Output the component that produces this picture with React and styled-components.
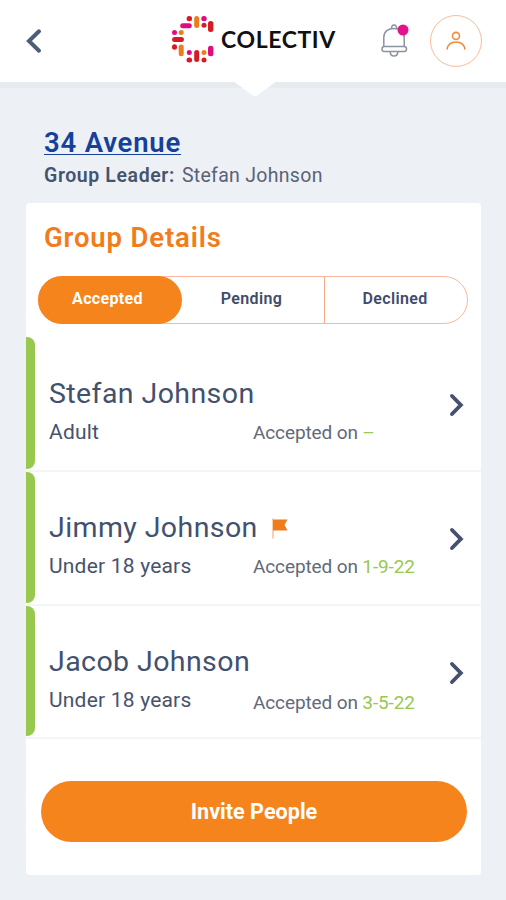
import React from "react";
import styled, { createGlobalStyle } from "styled-components";

const Global = createGlobalStyle`
  * { box-sizing: border-box; }
  body { margin: 0; background: #edf1f6; font-family: Roboto, "Liberation Sans", sans-serif; color: #41506d; }
  button { font: inherit; border: 0; padding: 0; background: none; cursor: pointer; }
`;

const Page = styled.div`
  width: 506px;
  height: 900px;
  overflow: hidden;
  background: #edf1f6;
`;

const Header = styled.header`
  position: relative;
  display: flex;
  align-items: center;
  height: 82px;
  padding: 0 24px 0 25px;
  background: #fff;
  box-shadow: 0 6px 0 #e7eaee;
`;

const Notch = styled.svg`
  position: absolute;
  left: 233px;
  top: 81px;
`;

const BackButton = styled.button`
  display: flex;
  width: 18px;
  margin-right: 127px;
`;

const Brand = styled.div`
  display: flex;
  align-items: center;
  width: 210px;
  gap: 7px;
`;

const BrandMark = styled.svg`
  flex: none;
  margin-top: -2px;
`;

const BrandName = styled.span`
  font-family: Lato, sans-serif;
  font-weight: 700;
  font-size: 23px;
  line-height: 28px;
  letter-spacing: 0.6px;
  color: #111;
  margin-top: -4px;
`;

const BellButton = styled.button`
  display: flex;
  margin-right: 21px;
`;

const Avatar = styled.button`
  display: flex;
  align-items: center;
  justify-content: center;
  width: 52px;
  height: 52px;
  border: 1px solid #f9bd9b;
  border-radius: 50%;
`;

const GroupIntro = styled.section`
  height: 121px;
  padding: 44px 0 0 44px;
`;

const GroupLink = styled.a`
  display: block;
  width: max-content;
  height: 29px;
  border-bottom: 1px solid #16419a;
  font-weight: 600;
  font-size: 27.5px;
  line-height: 33px;
  letter-spacing: 0.8px;
  color: #16419a;
`;

const Leader = styled.p`
  display: flex;
  gap: 7px;
  margin: 9px 0 0;
  font-size: 19.5px;
  line-height: 24px;
  letter-spacing: 0.3px;
  color: #596377;
`;

const LeaderLabel = styled.span`
  font-weight: 600;
  letter-spacing: 0.6px;
  color: #46536d;
`;

const Card = styled.main`
  width: 455px;
  height: 672px;
  margin-left: 26px;
  padding-top: 18px;
  background: #fff;
  border-radius: 4px;
`;

const CardTitle = styled.h1`
  margin: 0 0 22px 18px;
  font-weight: 600;
  font-size: 27.5px;
  line-height: 33px;
  letter-spacing: 0.85px;
  color: #f17c1b;
`;

const Tabs = styled.div`
  display: grid;
  grid-template-columns: 142px 143px 143px;
  width: 430px;
  height: 48px;
  margin: 0 0 13px 12px;
  border: 1px solid #f8b89f;
  border-radius: 24px;
`;

const Tab = styled.button`
  height: ${(p) => (p.$active ? "48px" : "46px")};
  margin: ${(p) => (p.$active ? "-1px -1px 0 -1px" : "0")};
  padding: ${(p) => (p.$active ? "0 5px 3px 0" : "0 2px 3px 0")};
  border-left: ${(p) => (p.$divided ? "1px solid #f8a987" : "0")};
  border-radius: ${(p) => (p.$active ? "24px" : "0")};
  background: ${(p) => (p.$active ? "#f5841c" : "transparent")};
  color: ${(p) => (p.$active ? "#fff" : "#414b6c")};
  font-size: 16px;
  font-weight: ${(p) => (p.$active ? 700 : 600)};
  letter-spacing: 0.35px;
`;

const Member = styled.article`
  display: flex;
  align-items: center;
  height: ${(p) => p.$height}px;
  padding-right: 16px;
  border-bottom: 2px solid #f3f5f8;
`;

const Status = styled.div`
  align-self: stretch;
  width: 9px;
  margin: 0 14px 1px 0;
  border-radius: 0 8px 8px 0;
  background: #98c84d;
`;

const MemberBody = styled.div`
  flex: 1;
  padding-top: 15px;
`;

const NameLine = styled.div`
  display: flex;
  align-items: center;
  gap: 14px;
  height: 34px;
  font-size: 28.5px;
  font-weight: 450;
  line-height: 34px;
  letter-spacing: 0.42px;
  color: #42516e;
`;

const DetailLine = styled.div`
  display: grid;
  grid-template-columns: 204px 1fr;
  margin-top: 7px;
  font-size: 21px;
  font-weight: 450;
  line-height: 28px;
  letter-spacing: 0.2px;
  color: #46536d;
`;

const Accepted = styled.span`
  padding-top: ${(p) => p.$drop}px;
  height: 28px;
  font-size: 19px;
  font-weight: 400;
  letter-spacing: -0.12px;
  color: #62697c;
`;

const DateText = styled.span`
  color: #98c84d;
`;

const InviteButton = styled.button`
  display: block;
  width: 426px;
  height: 61px;
  margin: 42px 0 0 15px;
  border-radius: 31px;
  background: #f5841c;
  color: #fff;
  font-size: 21.6px;
  font-weight: 700;
`;

const ChevronIcon = styled.svg`
  flex: none;
  margin-top: 2px;
`;

const RED = "#d51b24";
const PINK = "#e20a83";
const ORANGE = "#ee7d17";

/* centre x, centre y, width, height, colour of each pill of the mark */
const pills = [
  [17.3, 2.6, 5.4, 5.2, RED],
  [24.7, 6, 5, 12, ORANGE],
  [32, 2.6, 5.4, 5.2, PINK],
  [14, 9.8, 11.6, 5, PINK],
  [32, 9.3, 5, 5, RED],
  [38.7, 10.6, 5.4, 11, RED],
  [2.5, 16.5, 5, 5, PINK],
  [9.2, 16.5, 5, 5, ORANGE],
  [6, 23.5, 11.8, 5, RED],
  [2.5, 31, 5, 5.4, RED],
  [9.2, 34.3, 5, 11.8, ORANGE],
  [17.3, 36.4, 5, 5, PINK],
  [24.7, 40, 5, 12, RED],
  [32, 36.4, 5, 5, ORANGE],
  [38.7, 35, 5.4, 10.6, PINK],
  [17.3, 44, 5.6, 5, RED],
  [32, 44, 5, 5, RED],
];

const members = [
  { name: "Stefan Johnson", age: "Adult", date: "–", height: 135, drop: 1 },
  { name: "Jimmy Johnson", age: "Under 18 years", date: "1-9-22", height: 134, drop: 1, flagged: true },
  { name: "Jacob Johnson", age: "Under 18 years", date: "3-5-22", height: 133, drop: 3 },
];

function Chevron() {
  return (
    <ChevronIcon width="16" height="24" viewBox="0 0 16 24" fill="none">
      <path d="M3 3 11.800 12 3 21" stroke="#46516f" strokeWidth="3.900" strokeLinecap="round" />
    </ChevronIcon>
  );
}

function Flag() {
  return (
    <svg width="16" height="21" viewBox="0 0 16 21">
      <path d="M1 0.500v20" stroke="#f6ad78" strokeWidth="1.200" />
      <path d="M1 1.500H15.500L12.500 7 15.500 12.500H1Z" fill="#f17c1b" />
    </svg>
  );
}

export default function App() {
  return (
    <Page>
      <Global />
      <Header>
        <BackButton aria-label="Back">
          <svg width="18" height="26" viewBox="0 0 18 26" fill="none">
            <path d="M14 3.300 4 13 14 22.700" stroke="#4c5d79" strokeWidth="4" strokeLinecap="round" />
          </svg>
        </BackButton>
        <Brand>
          <BrandMark width="44" height="48" viewBox="-2 0 44 48">
            {pills.map(([cx, cy, w, h, c]) => (
              <rect key={`${cx}-${cy}`} x={cx - w / 2} y={cy - h / 2} width={w} height={h} rx="2.5" fill={c} />
            ))}
          </BrandMark>
          <BrandName>COLECTIV</BrandName>
        </Brand>
        <BellButton aria-label="Notifications">
          <svg width="29" height="36" viewBox="0 0 29 36" fill="none" stroke="#8c93a0" strokeWidth="1.5">
            <path d="M11.8 5.400a2.500 2.500 0 1 1 4.600 0" />
            <path d="M3.800 23.500V14.500C3.800 8.500 8.300 5.400 14 5.400s10.200 3.100 10.200 9.100V23.500" />
            <rect x="2" y="23.500" width="24.500" height="5" rx="2.300" />
            <path d="M10.200 28.800c0 2.500 1.600 4.200 3.800 4.200s3.800-1.700 3.800-4.200" />
            <circle cx="23" cy="7" r="5.500" fill="#e5138b" stroke="none" />
          </svg>
        </BellButton>
        <Avatar aria-label="Profile">
          <svg width="20" height="20" viewBox="0 0 20 20" fill="none" stroke="#ef8d3c" strokeWidth="1.600">
            <circle cx="10" cy="4.900" r="3.500" />
            <path d="M1 18.500C1.800 13.500 5.300 11 10 11s8.200 2.500 9 7.500" />
          </svg>
        </Avatar>
        <Notch width="44" height="17" viewBox="0 0 44 17">
          <path d="M0 0H44L24 14.500Q22 16.500 20 14.500Z" fill="#fff" />
        </Notch>
      </Header>
      <GroupIntro>
        <GroupLink>34 Avenue</GroupLink>
        <Leader>
          <LeaderLabel>Group Leader:</LeaderLabel>
          <span>Stefan Johnson</span>
        </Leader>
      </GroupIntro>
      <Card>
        <CardTitle>Group Details</CardTitle>
        <Tabs>
          <Tab $active>Accepted</Tab>
          <Tab>Pending</Tab>
          <Tab $divided>Declined</Tab>
        </Tabs>
        {members.map((m) => (
          <Member key={m.name} $height={m.height}>
            <Status />
            <MemberBody>
              <NameLine>
                {m.name}
                {m.flagged && <Flag />}
              </NameLine>
              <DetailLine>
                <span>{m.age}</span>
                <Accepted $drop={m.drop}>
                  Accepted on <DateText>{m.date}</DateText>
                </Accepted>
              </DetailLine>
            </MemberBody>
            <Chevron />
          </Member>
        ))}
        <InviteButton>Invite People</InviteButton>
      </Card>
    </Page>
  );
}
